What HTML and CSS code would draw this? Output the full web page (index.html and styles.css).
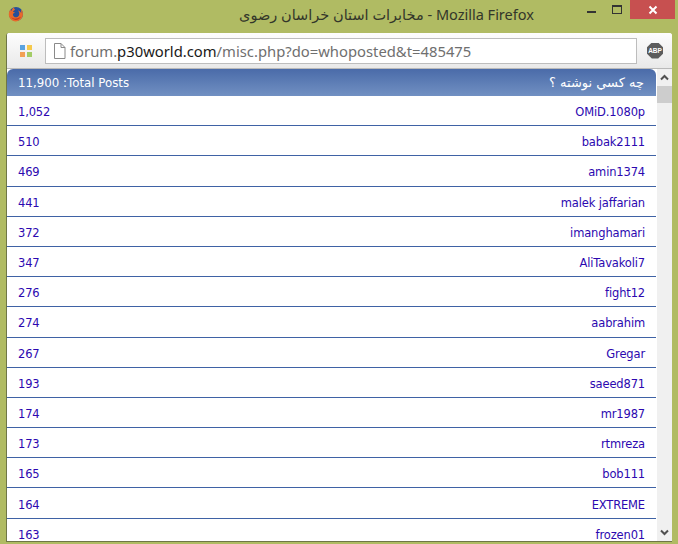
FILE: index.html
```html
<!DOCTYPE html>
<html lang="en">
<head>
<meta charset="utf-8">
<title>Mozilla Firefox</title>
<link rel="stylesheet" href="styles.css">
</head>
<body>
<header class="titlebar">
  <svg class="ff-logo" width="16" height="16" viewBox="0 0 16 16">
    <circle cx="8" cy="8" r="7" fill="#27509b"/>
    <path d="M13.9 4.2c.9 1.6 1.3 3.6.9 5.400-.7 3.400-3.600 5.800-7 5.800C4 15.400.8 12.100.8 8.200c0-1.800.6-3.500 1.700-4.800.2.800.4 1.300.8 1.700.4-1.500 1.400-3 2.800-3.800-.2 1.200.2 2 1.100 2.500C6 4.400 5.200 5.200 5 6c.8-.1 1.600.2 2 .8-1.500.1-2.300 1.200-2 2.400.4 1.500 2 2.300 3.600 2 1.900-.4 3-2.100 2.700-4-.1-1-.7-1.900-1.400-2.600 1.500.3 2.800 1.300 3.300 2.600.1-.9 0-2-.3-3z" fill="#e8692a"/>
    <path d="M13 10.500c-1 2.300-3.300 3.700-5.700 3.400-1.700-.2-3.200-1.200-4-2.600 1.300 1 3 1.500 4.700 1.300 2-.2 3.700-1.100 5-2.100z" fill="#c9391e"/>
  </svg>
  <h1 class="win-title"><bdi>مخابرات استان خراسان رضوی</bdi> - Mozilla Firefox</h1>
  <div class="win-controls">
    <span class="ctl ctl-min"><i class="min-glyph"></i></span>
    <span class="ctl ctl-max"><i class="max-glyph"></i></span>
    <span class="ctl ctl-close">
      <svg width="10" height="10" viewBox="0 0 10 10"><path d="M1.500 1.500l7 7M8.500 1.500l-7 7" stroke="#fff" stroke-width="2"/></svg>
    </span>
  </div>
</header>
<main class="window">
  <div class="toolbar">
    <span class="apps"><i class="a1"></i><i class="a2"></i><i class="a3"></i><i class="a4"></i></span>
    <div class="urlbar">
      <svg width="13" height="16" viewBox="0 0 13 16"><path d="M1.500.5h6.500l4 4v11h-10.500zM8 .5v4h4" fill="#fff" stroke="#8a8a8a"/></svg>
      <span class="url">forum.<b>p30world.com</b>/misc.php?do=whoposted&amp;t=485475</span>
    </div>
    <span class="abp">ABP</span>
  </div>
  <div class="viewport">
    <div class="list" dir="rtl">
      <div class="head"><span class="head-fa">چه كسي نوشته ؟</span><span>Total Posts: <bdi>11,900</bdi></span></div>
      <div class="row"><span>OMiD.1080p</span><span>1,052</span></div>
      <div class="row"><span>babak2111</span><span>510</span></div>
      <div class="row"><span>amin1374</span><span>469</span></div>
      <div class="row"><span>malek jaffarian</span><span>441</span></div>
      <div class="row"><span>imanghamari</span><span>372</span></div>
      <div class="row"><span>AliTavakoli7</span><span>347</span></div>
      <div class="row"><span>fight12</span><span>276</span></div>
      <div class="row"><span>aabrahim</span><span>274</span></div>
      <div class="row"><span>Gregar</span><span>267</span></div>
      <div class="row"><span>saeed871</span><span>193</span></div>
      <div class="row"><span>mr1987</span><span>174</span></div>
      <div class="row"><span>rtmreza</span><span>173</span></div>
      <div class="row"><span>bob111</span><span>165</span></div>
      <div class="row"><span>EXTREME</span><span>164</span></div>
      <div class="row"><span>frozen01</span><span>163</span></div>
    </div>
    <div class="scrollbar">
      <svg class="arrow" width="15" height="17" viewBox="0 0 15 17"><path d="M4 10.500l3.500-3.500 3.500 3.500" fill="none" stroke="#505050" stroke-width="2"/></svg>
      <div class="thumb"></div>
      <svg class="arrow arrow-down" width="15" height="17" viewBox="0 0 15 17"><path d="M4 6.500l3.500 3.500 3.500-3.500" fill="none" stroke="#505050" stroke-width="2"/></svg>
    </div>
  </div>
</main>
</body>
</html>
```
FILE: styles.css
```css
* { box-sizing: border-box; }
html, body { margin: 0; height: 100%; }
body {
  width: 678px;
  height: 544px;
  overflow: hidden;
  background: #b0bb63;
  display: flex;
  flex-direction: column;
  font-family: "DejaVu Sans", sans-serif;
}
.titlebar {
  height: 33px;
  flex: none;
  display: flex;
  align-items: flex-start;
  position: relative;
}
.ff-logo { position: absolute; left: 8px; top: 6px; }
.win-title {
  margin: 0;
  width: 100%;
  padding-top: 4px;
  padding-left: 95px;
  text-align: center;
  font: 400 14.5px/20px "Noto Sans", "DejaVu Sans", sans-serif;
  color: #33362a;
}
.win-controls {
  position: absolute;
  right: 3px;
  top: 0;
  display: flex;
}
.ctl { height: 19px; display: flex; align-items: center; justify-content: center; }
.ctl-min { width: 26px; }
.ctl-max { width: 26px; }
.ctl-close { width: 45px; background: #c75050; }
.min-glyph { width: 9px; height: 2px; margin-top: 5px; background: #333; display: block; }
.max-glyph { width: 10px; height: 9px; margin-top: -1px; border: 1px solid #333; border-top-width: 2px; display: block; }
.window {
  margin-left: 6px;
  width: 666px;
  height: 509px;
  flex: none;
  background: #fff;
  border-left: 1px solid #6f7646;
  border-bottom: 1px solid #6f7646;
  border-radius: 3px 3px 0 0;
  overflow: hidden;
  display: flex;
  flex-direction: column;
}
.toolbar {
  height: 36px;
  flex: none;
  display: flex;
  align-items: center;
  background: linear-gradient(#fdfdfd, #e9e9e9);
  border-bottom: 1px solid #b9b9b9;
}
.apps {
  width: 12px;
  height: 12px;
  margin-left: 13px;
  display: grid;
  grid-template-columns: 5px 5px;
  grid-template-rows: 5px 5px;
  gap: 2px;
}
.apps i { display: block; }
.a1 { background: #5aa3e0; }
.a2 { background: #f5c94c; }
.a3 { background: #f2a055; }
.a4 { background: #a3cc66; }
.urlbar {
  width: 592px;
  height: 26px;
  margin-left: 13px;
  padding-left: 7px;
  display: flex;
  align-items: center;
  gap: 4px;
  background: #fff;
  border: 1px solid #bdbdbd;
  white-space: nowrap;
}
.url {
  font: 400 14.8px/20px "Noto Sans", sans-serif;
  color: #6f6f6f;
}
.url b { font-weight: 400; color: #1a1a1a; }
.abp {
  width: 16px;
  height: 16px;
  margin-left: 10px;
  background: #5c5c5c;
  color: #fff;
  font: 700 6.5px/16px "Liberation Sans", sans-serif;
  text-align: center;
  clip-path: polygon(30% 0, 70% 0, 100% 30%, 100% 70%, 70% 100%, 30% 100%, 0 70%, 0 30%);
}
.viewport {
  flex: 1;
  min-height: 0;
  display: flex;
  overflow: hidden;
}
.list {
  width: 649px;
  margin-right: 1px;
  flex: none;
  font-size: 11.5px;
  letter-spacing: -0.15px;
  color: #2c08b0;
}
.head {
  height: 27px;
  padding: 0 12px 0 11px;
  display: flex;
  justify-content: space-between;
  align-items: center;
  font-size: 11.8px;
  letter-spacing: 0;
  color: #fff;
  background: linear-gradient(#4a6ba9, #7190c2);
  border-radius: 6px 6px 0 0;
}
.head-fa { font-size: 13px; }
.row {
  height: 30.2px;
  padding: 3px 11px 0 11px;
  display: flex;
  justify-content: space-between;
  align-items: center;
  border-bottom: 1px solid #3f62a5;
  white-space: nowrap;
}
.scrollbar {
  width: 15px;
  flex: none;
  background: #f0f0f0;
  display: flex;
  flex-direction: column;
}
.arrow { display: block; flex: none; }
.thumb { height: 17px; flex: none; background: #cdcdcd; }
.arrow-down { margin-top: auto; }
```
